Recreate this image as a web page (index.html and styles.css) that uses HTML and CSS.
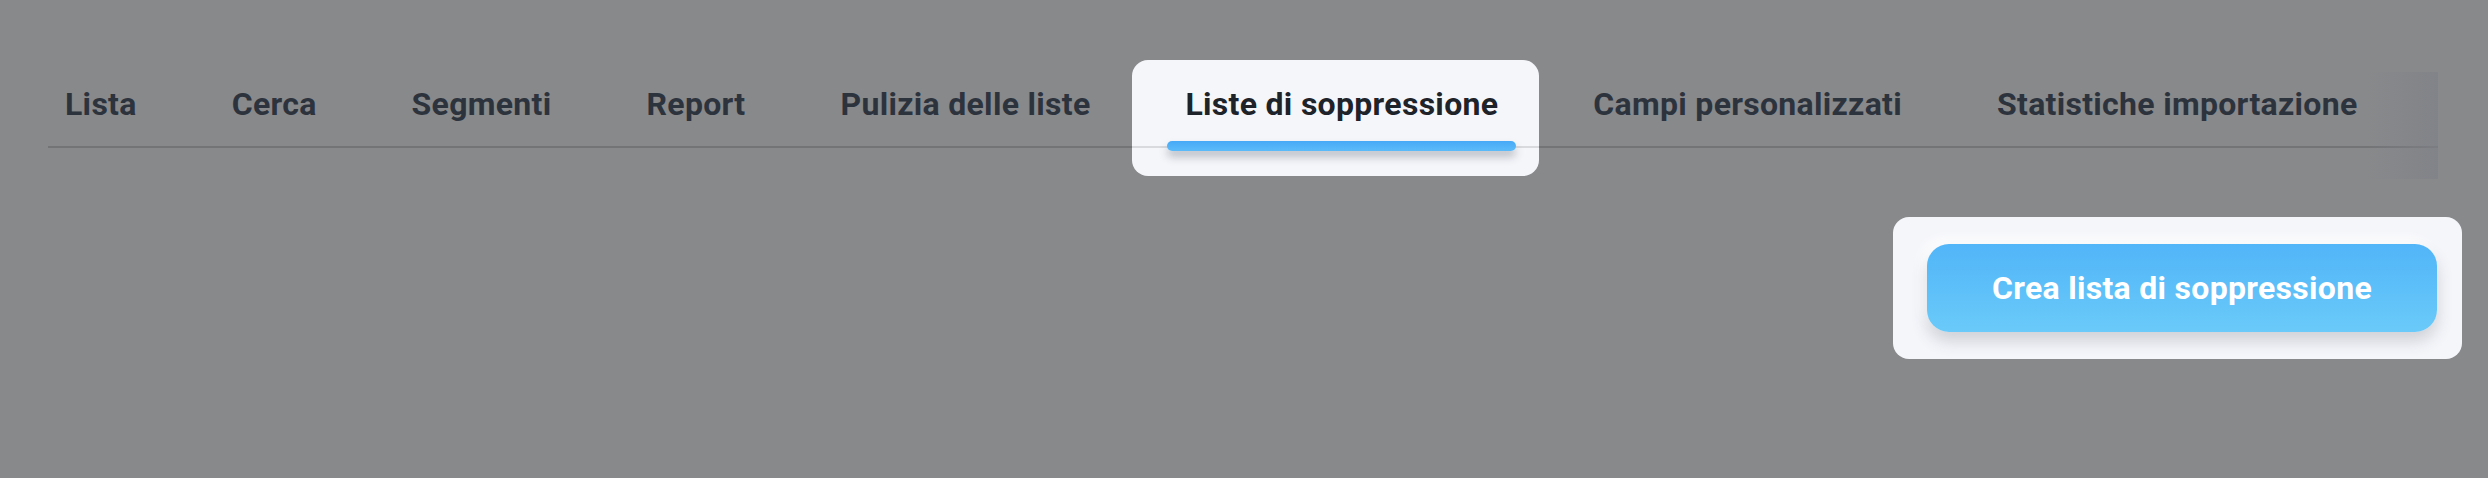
FILE: index.html
```html
<!DOCTYPE html>
<html lang="it">
  <head>
    <meta charset="utf-8">
    <meta name="viewport" content="width=device-width, initial-scale=1">
    <title>Liste di soppressione</title>
    <link rel="stylesheet" href="styles.css">
  </head>
  <body>
    <nav class="tabs">
      <ul class="tab-list">
        <li class="tab">Lista</li>
        <li class="tab">Cerca</li>
        <li class="tab">Segmenti</li>
        <li class="tab">Report</li>
        <li class="tab">Pulizia delle liste</li>
        <li class="tab tab-active">
          <span>Liste di soppressione</span>
          <span class="tab-bar"></span>
        </li>
        <li class="tab">Campi personalizzati</li>
        <li class="tab">Statistiche importazione</li>
      </ul>
    </nav>

    <div class="actions">
      <div class="spotlight">
        <button class="btn-primary" type="button">Crea lista di soppressione</button>
      </div>
    </div>
  </body>
</html>
```
FILE: styles.css
```css
:root {
  font-family: Roboto, "Noto Sans", Arial, sans-serif;
  font-size: 32px;
}

body {
  margin: 0;
  padding: 72px 0 0;
  background: #88898b;
  color: #2d333d;
}

/* tabs */
.tabs {
  position: relative;
  margin-left: 48px;
  width: 2390px;
  padding-bottom: 31px;
}
.tabs::after {
  /* scroll hint on the right edge */
  content: "";
  position: absolute;
  top: 0;
  right: 0;
  bottom: 0;
  width: 72px;
  background: linear-gradient(to right, rgba(126, 129, 135, 0), rgba(126, 129, 135, 0.7));
}
.tab-list {
  display: flex;
  align-items: flex-start;
  gap: 61px;
  margin: 0;
  padding: 0;
  list-style: none;
  border-bottom: 2px solid #737476;
}
.tab {
  padding: 13px 17px 23px;
  font-weight: 700;
  line-height: 38px;
  letter-spacing: 0.3px;
  white-space: nowrap;
}
.tab-active {
  display: flex;
  flex-direction: column;
  margin: -12px -24px -30px -36px;
  padding: 25px 41px 25px 53px;
  border-radius: 16px;
  color: #1e232a;
  background: linear-gradient(#d9dadd, #d9dadd) 0 86px / 100% 2px no-repeat, #f5f6fa;
}
.tab-bar {
  display: block;
  height: 10px;
  margin: 18px -18px 0;
  border-radius: 5px;
  background: linear-gradient(#47a9f7, #5bbbf9);
  box-shadow: 0 6px 9px rgba(40, 50, 70, 0.28);
}

/* actions */
.actions {
  display: flex;
  justify-content: flex-end;
  padding: 38px 26px 0 0;
}
.spotlight {
  padding: 27px 25px 27px 34px;
  border-radius: 16px;
  background: #f5f6fa;
}
.btn-primary {
  display: block;
  width: 510px;
  height: 88px;
  padding: 0;
  border: none;
  border-radius: 22px;
  font: inherit;
  font-weight: 700;
  letter-spacing: 0.3px;
  color: #fff;
  background: linear-gradient(#51b5f8, #6acaf9);
  box-shadow: 0 9px 16px rgba(50, 60, 80, 0.2), -5px -5px 12px #fff;
}
```
